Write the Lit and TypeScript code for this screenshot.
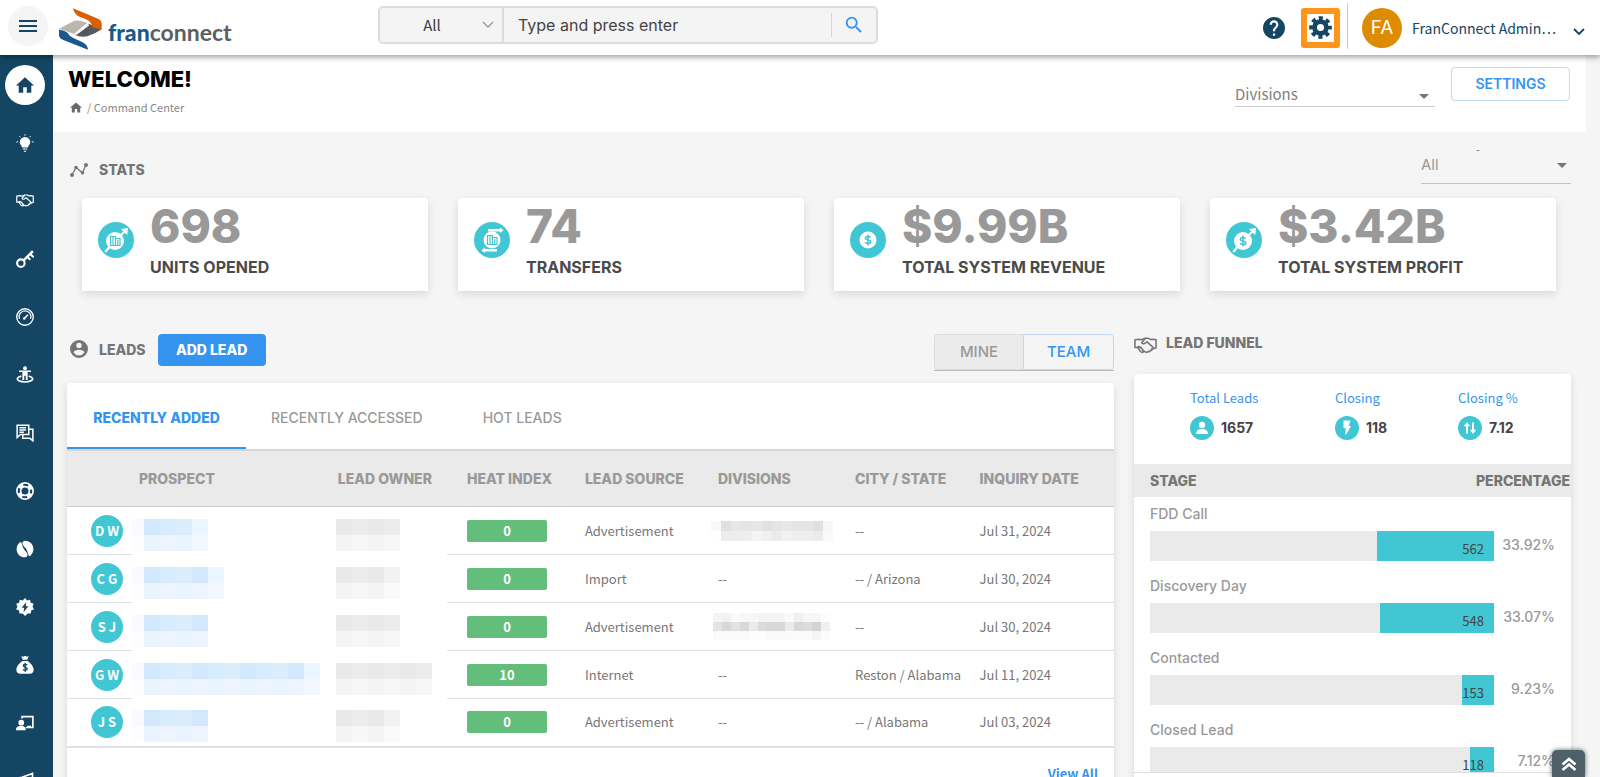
import { LitElement, html, css, svg, nothing } from "lit";
import { customElement, property } from "lit/decorators.js";

const HOME = svg`<path fill="currentColor" d="M10 20v-6h4v6h5v-8h3L12 3 2 12h3v8z"/>`;
const HANDSHAKE = svg`<g fill="none" stroke="currentColor" stroke-width="1.600" stroke-linejoin="round" stroke-linecap="round">
  <path d="M1 5.500l4-.6 3 .6 3.500-1.500h3.500l2.500 1.200 3-.3 2.500.6v8.500l-2.500.5M1 5.500v8h3"/>
  <path d="M11.500 4.500L8 8.500c.8 1.800 2.800 1.300 4.200 0l1.300-.8 6.500 5.800c.8 1-.3 2.200-1.400 1.500"/>
  <path d="M18.500 15c.8 1.200-.6 2.200-1.700 1.500.4 1.300-1.200 1.900-2.200 1.200-.6 1.200-2 1-2.800.4L9.500 17"/>
  <path d="M3.800 13.300c.8-1.400 2.300-.9 2.300.2 1.300-.5 2 .5 1.600 1.300 1.200-.2 1.700.9 1.200 1.700 1.200 0 1.300 1.600.3 2.100-1 .4-1.800-.3-2.600-1.100z"/></g>`;

const NAV: { label: string; icon: unknown }[] = [
  { label: "Home", icon: HOME },
  {
    label: "Ideas",
    icon: svg`<path fill="currentColor" d="M12 4a7 7 0 0 0-7 7c0 2.800 2.300 4 3.200 7h7.600c.9-3 3.200-4.200 3.200-7a7 7 0 0 0-7-7zM9 19.300h6v1.500H9zM10.500 22.200h3v1.300h-3z"/>
      <g stroke="currentColor" stroke-width="1.300"><path d="M12 .2v2M4.500 2.800l1.300 1.500M19.500 2.800l-1.300 1.500M.5 11l2.400-1.100M23.500 11l-2.400-1.100"/></g>`,
  },
  { label: "Franchise sales", icon: HANDSHAKE },
  {
    label: "Opener",
    icon: svg`<g fill="none" stroke="currentColor"><circle cx="6.500" cy="17.500" r="5" stroke-width="2.800"/><path stroke-width="3.200" d="M9.800 14.200L22.500 1.500"/><path stroke-width="2.800" d="M15 9l4 4M19 5.200l4.500 4.500"/></g>`,
  },
  {
    label: "Performance",
    icon: svg`<g fill="none" stroke="currentColor"><circle cx="12" cy="12" r="11" stroke-width="1.800"/><path stroke-width="1.600" d="M4.500 14.500A8 8 0 1 1 19.500 14.500"/><path stroke-width="2" d="M10.500 14.500l5.500-5.500"/></g><circle cx="11" cy="14" r="1.600" fill="currentColor"/>`,
  },
  {
    label: "Info manager",
    icon: svg`<circle cx="12" cy="3" r="2.600" fill="currentColor"/><path fill="currentColor" d="M4 6h16v2h-4.500v10.500h-2.500v-5.500h-2v5.500H8.500V8H4z"/><path fill="none" stroke="currentColor" stroke-width="2.200" d="M7 13.500c-6 1.500-6.500 4.500-3 6.300 4 2 12 2 16 0 3.500-1.800 3-4.800-3-6.300"/>`,
  },
  {
    label: "Messages",
    icon: svg`<g fill="none" stroke="currentColor" stroke-width="2"><path d="M1.500 1.500H17v12.500H6l-4.500 4z"/><path d="M17 7h5.500v15.500L18.500 19H9v-5"/><path d="M4.500 5h9M4.500 8h9M4.500 11h6"/></g>`,
  },
  {
    label: "Support",
    icon: svg`<g fill="none" stroke="currentColor"><circle cx="12" cy="12" r="10.800" stroke-width="2.200"/><circle cx="12" cy="12" r="5.800" stroke-width="2.200"/><circle cx="12" cy="12" r="8.200" stroke-width="4.600" stroke-dasharray="6.400 6.480" stroke-dashoffset="-3.240"/></g>`,
  },
  {
    label: "Smart connect",
    icon: svg`<path fill="currentColor" d="M4.500 3.500C0 8-.5 14.500 3.500 19.500c4 4 9 4.500 11 2.500s.5-5-2-7.500C9.500 11.500 9 9.500 8 6S6.500 2 4.500 3.500zM19.500 20.500C24 16 24.500 9.500 20.500 4.500c-4-4-9-4.500-11-2.500s-.5 5 2 7.500c3 3 3.500 5 4.500 8.500s1.500 4 3.500 2.500z"/>`,
  },
  {
    label: "Automation",
    icon: svg`<path fill="currentColor" fill-rule="evenodd" d="M12 0l2.800 3.200 4-.9.700 4 4 1.400-1.500 3.800 2 3.600-3.700 1.700-.7 4-4-.2L12 24l-3.100-3.400-4.200.2-.6-4L0 15.100l1.900-3.600L.3 7.700l4-1.400.7-4 4 .9zM13.500 5.500L7.500 13H11l-1 6 6.500-8h-3.500z"/>`,
  },
  {
    label: "Finance",
    icon: svg`<path fill="currentColor" d="M7 0l2.500 1L12-.3 14.500 1 17 0l-2 5H9zM8.500 6.500h7c4.500 3 8 7.500 8 11.700 0 4-2.500 5.300-5 5.300h-13c-2.500 0-5-1.300-5-5.300C.5 14 4 9.500 8.500 6.500z"/><path fill="none" stroke="#144563" stroke-width="1.800" d="M14.800 12.200c-.8-1.200-5-1.400-5 .9 0 2.500 5.200 1.200 5.200 4 0 2.300-4.500 2.200-5.600.6M12.200 9v12"/>`,
  },
  {
    label: "Training",
    icon: svg`<path fill="none" stroke="currentColor" stroke-width="2.200" d="M8 6V3.500h14.500V18H13"/><circle cx="7" cy="11.500" r="3.800" fill="currentColor"/><path fill="currentColor" d="M0 21.500c0-5 3-5.500 6.500-5.500s6.500.5 6.500 5.500zM15 15.500h5V18h-5z"/>`,
  },
  {
    label: "Marketing",
    icon: svg`<path fill="none" stroke="currentColor" stroke-width="2.200" d="M2 8l6-1L22 2v18L8 15l-6-1zM6 15l2 7h3l-2-6"/>`,
  },
];

const UP_ARROW = svg`<path fill="none" stroke="#fff" stroke-width="2.200" d="M23 13l4.500-4.500"/><path fill="#fff" d="M23 7l7-1-.8 7z"/>`;
const LENS = svg`<circle cx="17" cy="19" r="9" fill="#fff"/><path stroke="#fff" stroke-width="2.500" stroke-linecap="round" d="M11 25.500L8 29"/>`;
const BUILDING = svg`<g fill="none" stroke="#41c6d3" stroke-width="1.200"><path d="M12.500 23.500v-9h5v9M15 14.500v9M17.500 16.500h4.500v7h-10M19.800 18v5.500"/></g>`;
const dollar = (cx: number, cy: number) => svg`<path transform="translate(${cx} ${cy})" fill="none" stroke="#41c6d3" stroke-width="1.500" d="M2.600-2.600C1.800-4-2.600-4.100-2.600-1.700-2.600.7 2.800-.6 2.800 2 2.800 4.100-2 4-2.900 2.400M0-5.500v11"/>`;

const STATS = [
  { value: "698", label: "UNITS OPENED", icon: svg`${LENS}${UP_ARROW}${BUILDING}` },
  {
    value: "74",
    label: "TRANSFERS",
    icon: svg`<circle cx="18" cy="18" r="8.500" fill="#fff"/><g transform="translate(1 -1)">${BUILDING}</g><path fill="#fff" d="M14 7h12V5.500l3.500 2.700L26 11V9.500H14zM23 27H11v-1.500l-3.500 2.700L11 31v-1.500h12z"/>`,
  },
  { value: "$9.99B", label: "TOTAL SYSTEM REVENUE", icon: svg`<circle cx="18" cy="18" r="8.500" fill="#fff"/>${dollar(18, 18)}` },
  { value: "$3.42B", label: "TOTAL SYSTEM PROFIT", icon: svg`${LENS}${UP_ARROW}${dollar(17, 19)}` },
];

type Mosaic = { cell: number; rows: string[][] };
const B = ["#d3e8fd", "#dbecfc", "#d6ebfc", "#e9f5ff"];
const blue = (n: number, tail: boolean): Mosaic => ({
  cell: 16,
  rows: [
    ["#f8faff", ...Array.from({ length: n }, (_, i) => B[(i * 2) % 3]), ...(tail ? [B[3]] : [])],
    ["#fdfdff", ...Array.from({ length: n }, (_, i) => (i % 2 ? "#eef4fd" : "#eaf4fe")), ...(tail ? ["#f2f8ff"] : [])],
  ],
});
const grey = (n: number, tail: boolean): Mosaic => ({
  cell: 16,
  rows: [
    [...Array.from({ length: n }, (_, i) => (i % 2 ? "#ececec" : "#e9e9e9")), ...(tail ? ["#f2f2f2"] : [])],
    [...Array.from({ length: n }, (_, i) => (i % 2 ? "#f7f7f7" : "#f4f4f4")), ...(tail ? ["#fafafa"] : [])],
  ],
});

type Lead = { initials: string; name: Mosaic; owner: Mosaic; heat: number; source: string; division: string | Mosaic; city: string; date: string };
const LEADS: Lead[] = [
  {
    initials: "D W", name: blue(3, true), owner: grey(4, false), heat: 0, source: "Advertisement",
    division: {
      cell: 11,
      rows: [
        ["#f9f9f9", "#e0e0e0", "#e7e7e7", "#e5e5e5", "#e7e7e7", "#e1e1e1", "#e5e5e5", "#e8e8e8", "#e5e5e5", "#e5e5e5", "#e0e0e0", "#f7f7f7"],
        ["#fefefe", "#ededed", "#ededed", "#eeeeee", "#f4f4f4", "#f0f0f0", "#ebebeb", "#f2f2f2", "#eeeeee", "#eeeeee", "#ebebeb", "#f9f9f9"],
      ],
    },
    city: "--", date: "Jul 31, 2024",
  },
  { initials: "C G", name: blue(4, true), owner: grey(3, true), heat: 0, source: "Import", division: "--", city: "-- / Arizona", date: "Jul 30, 2024" },
  {
    initials: "S J", name: blue(4, false), owner: grey(4, false), heat: 0, source: "Advertisement",
    division: {
      cell: 9,
      rows: [
        ["#f5f5f5", "#f2f2f2", "#fafafa", "#f7f7f7", "#f7f7f7", "#f3f3f3", "#f5f5f5", "#f5f5f5", "#fafafa", "#f0f0f0", "#f7f7f7", "#f6f6f6", "#fdfdfd"],
        ["#e3e3e3", "#d8d8d8", "#e2e2e2", "#d9d9d9", "#ebebeb", "#dbdbdb", "#d8d8d8", "#d8d8d8", "#ebebeb", "#d8d8d8", "#dbdbdb", "#d3d3d3", "#f1f1f1"],
        ["#fafafa", "#fbfbfb", "#fbfbfb", "#fafafa", "#fdfdfd", "#fdfdfd", "#f9f9f9", "#f9f9f9", "#fafafa", "#fbfbfb", "#fbfbfb", "#f5f5f5", "#fcfcfc"],
      ],
    },
    city: "--", date: "Jul 30, 2024",
  },
  { initials: "G W", name: blue(10, true), owner: grey(6, false), heat: 10, source: "Internet", division: "--", city: "Reston / Alabama", date: "Jul 11, 2024" },
  { initials: "J S", name: blue(4, false), owner: grey(3, true), heat: 0, source: "Advertisement", division: "--", city: "-- / Alabama", date: "Jul 03, 2024" },
];

const STAGES = [
  { name: "FDD Call", count: 562, pct: 33.92 },
  { name: "Discovery Day", count: 548, pct: 33.07 },
  { name: "Contacted", count: 153, pct: 9.23 },
  { name: "Closed Lead", count: 118, pct: 7.12 },
];

const FUNNEL = [
  { label: "Total Leads", value: "1657", icon: svg`<circle cx="12" cy="9" r="3.200" fill="#fff"/><path fill="#fff" d="M6 18c0-4 3-5 6-5s6 1 6 5z"/>` },
  { label: "Closing", value: "118", icon: svg`<path fill="#fff" d="M8.500 4.500h7l-1.800 5.500H16l-5.500 9.500v-7.500h-2z"/>` },
  { label: "Closing %", value: "7.12", icon: svg`<path fill="#fff" d="M9 6l3.200 4.200H10V17.500H8v-7.300H5.800zM15 18l-3.200-4.200H14V6.500h2v7.300h2.200z"/>` },
];

const base = css`
  * { box-sizing: border-box; }
  button, input, select { font: inherit; color: inherit; margin: 0; border: 0; background: none; border-radius: 0; }
  button { cursor: pointer; padding: 0; }
  a { text-decoration: none; color: inherit; }
  svg { display: block; flex: none; }
`;

@customElement("pixel-mosaic")
class PixelMosaic extends LitElement {
  static styles = css`
    :host { display: block; }
    svg { display: block; }
  `;
  @property({ attribute: false }) data!: Mosaic;
  render() {
    const { cell, rows } = this.data;
    const w = cell * rows[0].length;
    const h = cell * rows.length;
    return html`<svg width=${w} height=${h} viewBox="0 0 ${w} ${h}" shape-rendering="crispEdges" aria-hidden="true">
      ${rows.map((r, y) => r.map((c, x) => svg`<rect x=${x * cell} y=${y * cell} width=${cell} height=${cell} fill=${c} />`))}
    </svg>`;
  }
}

@customElement("top-bar")
class TopBar extends LitElement {
  static styles = [base, css`
    :host { display: flex; align-items: center; height: 55px; background: #fff; box-shadow: 0 2px 6px rgba(0, 0, 0, .4); position: relative; z-index: 2; color: #144563; }
    .menu { width: 40px; height: 40px; margin-left: 8px; border-radius: 50%; background: #f5f5f5; display: grid; place-items: center; margin-bottom: 3px; }
    .logo { display: flex; align-items: center; margin-left: 11px; width: 319px; font: 700 23px/30px Lato, sans-serif; color: #5b5e63; gap: 6px; padding-top: 2px; }
    .logo b { color: #195a8c; }
    .word { padding-top: 6px; }
    .search { display: flex; width: 500px; height: 38px; margin-bottom: 5px; border: 2px solid #dcdcdc; border-radius: 5px; background: #f4f4f4; align-items: center; color: #3c3c3c; }
    .scope { position: relative; align-self: stretch; width: 124px; border-right: 2px solid #dcdcdc; display: flex; align-items: center; }
    .scope select { appearance: none; width: 100%; height: 100%; padding: 0 18px 0 0; text-align: center; text-align-last: center; font: 15px/24px "Noto Sans CJK SC", sans-serif; }
    .scope svg { position: absolute; right: 8px; pointer-events: none; }
    .search input { flex: 1; min-width: 0; height: 100%; padding: 0 14px; font: 16px/20px Inter, sans-serif; outline: 0; }
    .search input::placeholder { color: #444; opacity: 1; }
    .go { width: 45px; height: 24px; border-left: 1px solid #d5d5d5; display: grid; place-items: center; }
    .right { margin-left: auto; display: flex; align-items: center; }
    .gear { width: 39px; height: 40px; margin-left: 16px; border: 6px solid #ff9519; border-radius: 3px; display: grid; place-items: center; }
    .rule { width: 1px; height: 46px; margin: 0 14px 3px 7px; background: #ccc; }
    .user { display: flex; align-items: center; gap: 10px; padding-right: 15px; font: 14px/24px "Noto Sans CJK SC", sans-serif; }
    .avatar { width: 40px; height: 40px; border-radius: 50%; background: #dd8b00; color: #fff; display: grid; place-items: center; font: 19px/20px Inter, sans-serif; }
    .user svg { margin-top: 8px; margin-left: 7px; }
  `];
  render() {
    return html`
      <button class="menu" aria-label="Menu"><svg width="18" height="12" viewBox="0 0 18 12"><path stroke="#144563" stroke-width="2" d="M0 1h18M0 6h18M0 11h18"/></svg></button>
      <a class="logo" href="#">
        <svg width="43" height="42" viewBox="177 25 129 126">
          <path fill="#bab8ae" d="M177 87L220 65Q236 58 262 70L224 104Q200 94 177 87z"/>
          <path fill="#55585e" d="M224 105L268 73Q280 78 305 89Q285 103 262 110Q242 114 224 105z"/>
          <path fill="#fff" d="M256 74l12 3-38 28-8-2z"/>
          <path fill="#d95f02" d="M219 26L294 57Q305 62 305 72V89Q290 87 276 81Q274 66 258 59L240 52Q222 44 219 26z"/>
          <path fill="#1b588c" d="M177 90Q204 94 207 106Q214 114 240 124Q264 134 264 150L190 121Q177 116 177 106z"/>
        </svg>
        <span class="word"><b>fran</b>connect</span>
      </a>
      <form class="search" role="search" @submit=${(e: Event) => e.preventDefault()}>
        <div class="scope">
          <select aria-label="Search in"><option>All</option></select>
          <svg width="12" height="8" viewBox="0 0 12 8"><path fill="none" stroke="#999" stroke-width="1.400" d="M1 1l5 5 5-5"/></svg>
        </div>
        <input type="text" aria-label="Search" placeholder="Type and press enter">
        <button class="go" aria-label="Search"><svg width="22" height="22" viewBox="0 0 24 24"><path fill="#3594f0" d="M15.500 14h-.79l-.28-.27A6.470 6.470 0 0 0 16 9.500 6.500 6.500 0 1 0 9.500 16c1.610 0 3.090-.59 4.230-1.570l.27.28v.79l5 4.990L20.490 19zm-6 0C7.010 14 5 11.990 5 9.500S7.010 5 9.500 5 14 7.010 14 9.500 11.990 14 9.500 14z"/></svg></button>
      </form>
      <div class="right">
        <button aria-label="Help"><svg width="22" height="22" viewBox="2 2 20 20"><path fill="#144563" d="M12 2a10 10 0 1 0 0 20 10 10 0 0 0 0-20zm1 17h-2v-2h2zm2.070-7.750l-.9.920C13.450 12.900 13 13.500 13 15h-2v-.5c0-1.100.45-2.100 1.170-2.830l1.240-1.260c.37-.36.59-.86.59-1.410a2 2 0 0 0-4 0H8a4 4 0 0 1 8 0c0 .88-.36 1.680-.93 2.250z"/></svg></button>
        <button class="gear" aria-label="Setup"><svg width="23" height="23" viewBox="0 0 24 24"><g fill="none" stroke="#144563"><circle cx="12" cy="12" r="6.200" stroke-width="5"/><circle cx="12" cy="12" r="9.800" stroke-width="4" stroke-dasharray="4.200 3.497" stroke-dashoffset="2.100"/></g></svg></button>
        <span class="rule"></span>
        <a class="user" href="#"><span class="avatar">FA</span><span>FranConnect Admin…</span>
          <svg width="12" height="8" viewBox="0 0 12 8"><path fill="none" stroke="#144563" stroke-width="1.800" d="M1 1l5 5 5-5"/></svg></a>
      </div>`;
  }
}

@customElement("side-nav")
class SideNav extends LitElement {
  static styles = [base, css`
    :host { display: block; background: #144563; color: #fff; overflow: hidden; }
    nav { display: flex; flex-direction: column; padding-top: 1px; }
    a { height: 58px; padding-right: 3px; display: grid; place-items: center; flex: none; }
    .dot { width: 40px; height: 40px; display: grid; place-items: center; border-radius: 50%; }
    .on .dot { background: #fff; color: #144563; }
  `];
  render() {
    return html`<nav>${NAV.map((n, i) => html`<a href="#" class=${i === 0 ? "on" : nothing} aria-label=${n.label}>
      <span class="dot"><svg width="18" height="18" viewBox=${i === 0 ? "2 2 20 19" : "0 0 24 24"}>${n.icon}</svg></span></a>`)}</nav>`;
  }
}

@customElement("stat-card")
class StatCard extends LitElement {
  static styles = [base, css`
    :host { display: flex; align-items: flex-start; gap: 16px; height: 93px; padding: 4px 16px 0; background: #fff; border-radius: 4px 4px 0 0; box-shadow: 0 3px 8px rgba(0, 0, 0, .12); font-family: Inter, sans-serif; overflow: hidden; }
    svg { margin-top: 20px; }
    .value { font-weight: 800; font-size: 46px; line-height: 48px; color: #999; }
    .label { font-weight: 700; font-size: 16px; line-height: 20px; color: #4a4a4a; margin-top: 7px; white-space: nowrap; }
  `];
  @property({ attribute: false }) stat!: (typeof STATS)[number];
  render() {
    return html`<svg width="36" height="36" viewBox="0 0 36 36"><circle cx="18" cy="18" r="18" fill="#41c6d3"/>${this.stat.icon}</svg>
      <div><div class="value">${this.stat.value}</div><div class="label">${this.stat.label}</div></div>`;
  }
}

@customElement("leads-panel")
class LeadsPanel extends LitElement {
  static styles = [base, css`
    :host { display: block; font: 13px/20px "Noto Sans CJK SC", sans-serif; color: #777; }
    .head { display: flex; align-items: flex-start; height: 49px; font-family: Inter, sans-serif; }
    .head h2 { margin: 0 12px 0 11px; font-size: 14px; line-height: 32px; font-weight: 800; color: #757575; }
    .head > svg { margin: 6px 0 0 3px; }
    .add { width: 108px; height: 32px; border-radius: 4px; background: #3594f0; color: #fff; font-weight: 800; font-size: 14px; }
    .toggle { margin-left: auto; display: flex; height: 37px; border-bottom: 1px solid #bbb; font-weight: 500; font-size: 15px; }
    .toggle button { width: 91px; border: 1px solid #bfd9f0; border-radius: 0 4px 4px 0; color: #3594f0; }
    .toggle .off { width: 89px; background: #ebebeb; color: #999; border-color: #ddd; border-right: 0; border-radius: 4px 0 0 4px; }
    .card { background: #fff; border-radius: 4px; box-shadow: 0 3px 8px rgba(0, 0, 0, .12); }
    .tabs { display: flex; height: 68px; border-bottom: 2px solid #d6d6d6; font: 500 14px/20px Inter, sans-serif; color: #999; }
    .tabs button { padding: 4px 35px 0 25px; }
    .tabs .on { width: 179px; padding: 6px 0 0; font-weight: 800; color: #3594f0; border-bottom: 2px solid #3594f0; }
    table { width: 100%; border-collapse: separate; border-spacing: 0; table-layout: fixed; border-bottom: 2px solid #e1e1e1; }
    th { height: 56px; padding: 0 0 0 7px; background: #eaeaea; border-bottom: 1px solid #ccc; text-align: left; font: 800 14px/20px Inter, sans-serif; color: #999; white-space: nowrap; }
    td { height: 48px; padding: 0 0 0 7px; border-bottom: 1px solid #e1e1e1; white-space: nowrap; }
    tbody tr:last-child td { border-bottom-color: transparent; height: 47px; }
    .c0 { width: 6.2%; } .c1 { width: 19%; } .c2 { width: 11.1%; } .c3 { width: 12.5%; } .c4 { width: 12.7%; } .c5 { width: 13.1%; } .c6 { width: 11.9%; }
    td.avatar { padding: 0 0 0 24px; }
    .avatar span { display: grid; place-items: center; width: 32px; height: 32px; border-radius: 50%; background: #41c6d3; color: #fff; font-weight: 700; }
    td.masked { border-bottom-color: transparent; padding: 8px 0 0 5px; }
    td.masked.name { padding-left: 0; overflow: hidden; }
    .name pixel-mosaic { margin-left: -4px; }
    td.mosaic { padding: 0 15px 0 0; }
    .mosaic pixel-mosaic { display: flex; justify-content: center; }
    th.heat, td.heat { padding-left: 20px; }
    .heat span { display: block; width: 80px; height: 22px; line-height: 22px; border-radius: 2px; background: #64be7b; color: #fff; font-weight: 700; text-align: center; }
    .foot { display: flex; justify-content: flex-end; padding: 16px 16px 20px; }
    .foot a { color: #3594f0; font-weight: 700; }
  `];
  render() {
    return html`
      <div class="head">
        <svg width="18" height="18" viewBox="2 2 20 20"><path fill="#757575" d="M12 2a10 10 0 1 0 0 20 10 10 0 0 0 0-20zm0 3a3 3 0 1 1 0 6 3 3 0 0 1 0-6zm0 14.200a7.200 7.200 0 0 1-6-3.220c.03-1.990 4-3.080 6-3.080 1.990 0 5.970 1.090 6 3.080a7.200 7.200 0 0 1-6 3.220z"/></svg>
        <h2>LEADS</h2><button class="add">ADD LEAD</button>
        <div class="toggle"><button class="off">MINE</button><button>TEAM</button></div>
      </div>
      <div class="card">
        <div class="tabs"><button class="on">RECENTLY ADDED</button><button>RECENTLY ACCESSED</button><button>HOT LEADS</button></div>
        <table>
          <thead><tr>
            <th class="c0"></th><th class="c1">PROSPECT</th><th class="c2">LEAD OWNER</th><th class="c3 heat">HEAT INDEX</th>
            <th class="c4">LEAD SOURCE</th><th class="c5">DIVISIONS</th><th class="c6">CITY / STATE</th><th>INQUIRY DATE</th>
          </tr></thead>
          <tbody>${LEADS.map((l) => html`<tr>
            <td class="avatar"><span>${l.initials}</span></td>
            <td class="masked name"><pixel-mosaic .data=${l.name}></pixel-mosaic></td>
            <td class="masked"><pixel-mosaic .data=${l.owner}></pixel-mosaic></td>
            <td class="heat"><span>${l.heat}</span></td>
            <td>${l.source}</td>
            ${typeof l.division === "string" ? html`<td>${l.division}</td>` : html`<td class="mosaic"><pixel-mosaic .data=${l.division}></pixel-mosaic></td>`}
            <td>${l.city}</td><td>${l.date}</td>
          </tr>`)}</tbody>
        </table>
        <div class="foot"><a href="#">View All</a></div>
      </div>`;
  }
}

@customElement("funnel-panel")
class FunnelPanel extends LitElement {
  static styles = [base, css`
    :host { display: block; font: 500 14px/20px Inter, sans-serif; color: #999; }
    .head { display: flex; height: 40px; gap: 8px; color: #757575; }
    .head svg { margin-top: 2px; }
    h2 { margin: 0; font-size: 14px; line-height: 18px; font-weight: 800; }
    .card { background: #fff; border-radius: 4px; box-shadow: 0 3px 8px rgba(0, 0, 0, .12); padding-bottom: 30px; }
    .totals { display: grid; grid-template-columns: 145fr 123fr 113fr; padding: 14px 0 24px 56px; height: 90px; }
    .totals a { display: block; color: #3594f0; font: 13px/20px "Noto Sans CJK SC", sans-serif; }
    .num { display: flex; align-items: center; gap: 7px; margin-top: 8px; font-weight: 700; color: #444; }
    .bar-head { display: flex; justify-content: space-between; align-items: center; height: 33px; padding: 0 1px 0 16px; background: #eaeaea; color: #757575; font-weight: 800; }
    .stages { height: 276px; overflow: hidden; border-bottom: 1px solid #ddd; }
    .stage { display: grid; grid-template-columns: 1fr 61px; padding: 7px 16px 11px; row-gap: 7px; height: 72px; }
    .stage .title { grid-column: 1 / 3; }
    .track { display: flex; justify-content: flex-end; position: relative; height: 30px; background: #eaeaea; }
    .fill { background: #41c6d3; }
    .count { position: absolute; right: 10px; top: 8px; color: #444; font: 13px/20px "Noto Sans CJK SC", sans-serif; }
    .pct { text-align: right; line-height: 28px; }
  `];
  render() {
    return html`
      <div class="head"><svg width="24" height="20" viewBox="0 3 25 18">${HANDSHAKE}</svg><h2>LEAD FUNNEL</h2></div>
      <div class="card">
        <div class="totals">${FUNNEL.map((f) => html`<div><a href="#">${f.label}</a>
          <div class="num"><svg width="24" height="24" viewBox="0 0 24 24"><circle cx="12" cy="12" r="12" fill="#41c6d3"/>${f.icon}</svg>${f.value}</div></div>`)}</div>
        <div class="bar-head"><span>STAGE</span><span>PERCENTAGE</span></div>
        <div class="stages">${STAGES.map((s) => html`<div class="stage">
          <span class="title">${s.name}</span>
          <div class="track"><div class="fill" style="width:${s.pct}%"></div><span class="count">${s.count}</span></div>
          <span class="pct">${s.pct}%</span></div>`)}</div>
      </div>`;
  }
}

@customElement("app-root")
class AppRoot extends LitElement {
  static styles = [base, css`
    :host { display: grid; grid-template-rows: auto minmax(0, 1fr); height: 100vh; overflow: hidden; background: #f5f5f5; position: relative; }
    .body { display: grid; grid-template-columns: 53px minmax(0, 1fr); min-height: 0; }
    main { overflow: hidden; min-height: 0; }
    .page-head { display: flex; align-items: flex-start; height: 77px; margin-right: 14px; padding: 12px 16px 0 15px; background: #fff; }
    h1 { margin: 0; font: 800 22px/24px Inter, sans-serif; color: #000; }
    .crumb { display: flex; align-items: center; gap: 5px; margin-top: 8px; padding-left: 2px; font: 11px/16px "Noto Sans CJK SC", sans-serif; color: #888; }
    .crumb svg { color: #6b6b6b; }
    .drop { position: relative; display: flex; border-bottom: 1px solid #ccc; color: #808080; }
    .drop select { appearance: none; width: 100%; padding: 0; font: 15px/24px "Noto Sans CJK SC", sans-serif; outline: 0; }
    .drop svg { position: absolute; right: 6px; bottom: 7px; pointer-events: none; }
    .divisions { width: 200px; height: 32px; margin: 8px 16px 0 auto; padding-top: 7px; }
    .settings { width: 119px; height: 34px; border: 1px solid #bfd9ee; border-radius: 4px; color: #3594f0; font: 600 14px/20px Inter, sans-serif; }
    .content { padding: 0 29px 0 14px; }
    .stats-head { display: flex; height: 66px; align-items: flex-start; justify-content: space-between; }
    .stats-head h2 { display: flex; align-items: center; gap: 11px; margin: 28px 0 0 3px; font: 800 14px/20px Inter, sans-serif; color: #757575; }
    .period { width: 150px; font: 11px/12px "Noto Sans CJK SC", sans-serif; color: #777; }
    .dash { padding: 11px 0 0 55px; height: 20px; }
    .period .drop { height: 32px; padding-bottom: 5px; border-color: #c4c4c4; color: #999; }
    .period .drop select { font: 15px/24px Inter, sans-serif; }
    .period .drop svg { right: 4px; bottom: 15px; }
    .cards { display: grid; grid-template-columns: repeat(4, minmax(0, 1fr)); gap: 30px; padding: 0 15px; }
    .columns { display: grid; grid-template-columns: minmax(0, 1047fr) minmax(0, 437fr); gap: 20px; margin-top: 43px; align-items: start; }
    .to-top { position: absolute; right: 15px; bottom: 0; width: 33px; height: 27px; border-radius: 5px 5px 0 0; background: #4f6069; box-shadow: 0 0 5px rgba(0, 0, 0, .6); display: grid; place-items: center; z-index: 3; }
  `];
  render() {
    const caret = html`<svg width="10" height="5" viewBox="0 0 10 5"><path fill="#757575" d="M0 0h10L5 5z"/></svg>`;
    return html`
      <top-bar></top-bar>
      <div class="body">
        <side-nav></side-nav>
        <main>
          <div class="page-head">
            <div><h1>WELCOME!</h1>
              <div class="crumb"><svg width="12" height="11" viewBox="2 3 20 17">${HOME}</svg><span>/ Command Center</span></div></div>
            <div class="drop divisions"><select aria-label="Divisions"><option>Divisions</option></select>${caret}</div>
            <button class="settings">SETTINGS</button>
          </div>
          <div class="content">
            <div class="stats-head">
              <h2><svg width="18" height="14" viewBox="0 0 18 14"><path fill="none" stroke="#757575" stroke-width="1.300" d="M2 12L6 4.500l6.500 5.300L16 2"/><g fill="#757575"><circle cx="2" cy="12" r="2"/><circle cx="6" cy="4.500" r="1.800"/><circle cx="12.500" cy="9.800" r="1.800"/><circle cx="16" cy="2" r="2"/></g></svg>STATS</h2>
              <div class="period"><div class="dash">-</div>
                <div class="drop"><select aria-label="Stats period"><option>All</option></select>${caret}</div></div>
            </div>
            <div class="cards">${STATS.map((s) => html`<stat-card .stat=${s}></stat-card>`)}</div>
            <div class="columns"><leads-panel></leads-panel><funnel-panel></funnel-panel></div>
          </div>
        </main>
      </div>
      <button class="to-top" aria-label="Back to top"><svg width="16" height="14" viewBox="0 0 16 14"><path fill="none" stroke="#fff" stroke-width="2.600" d="M1.500 7.500L8 2l6.500 5.500M1.500 13L8 7.500l6.500 5.500"/></svg></button>`;
  }
}
